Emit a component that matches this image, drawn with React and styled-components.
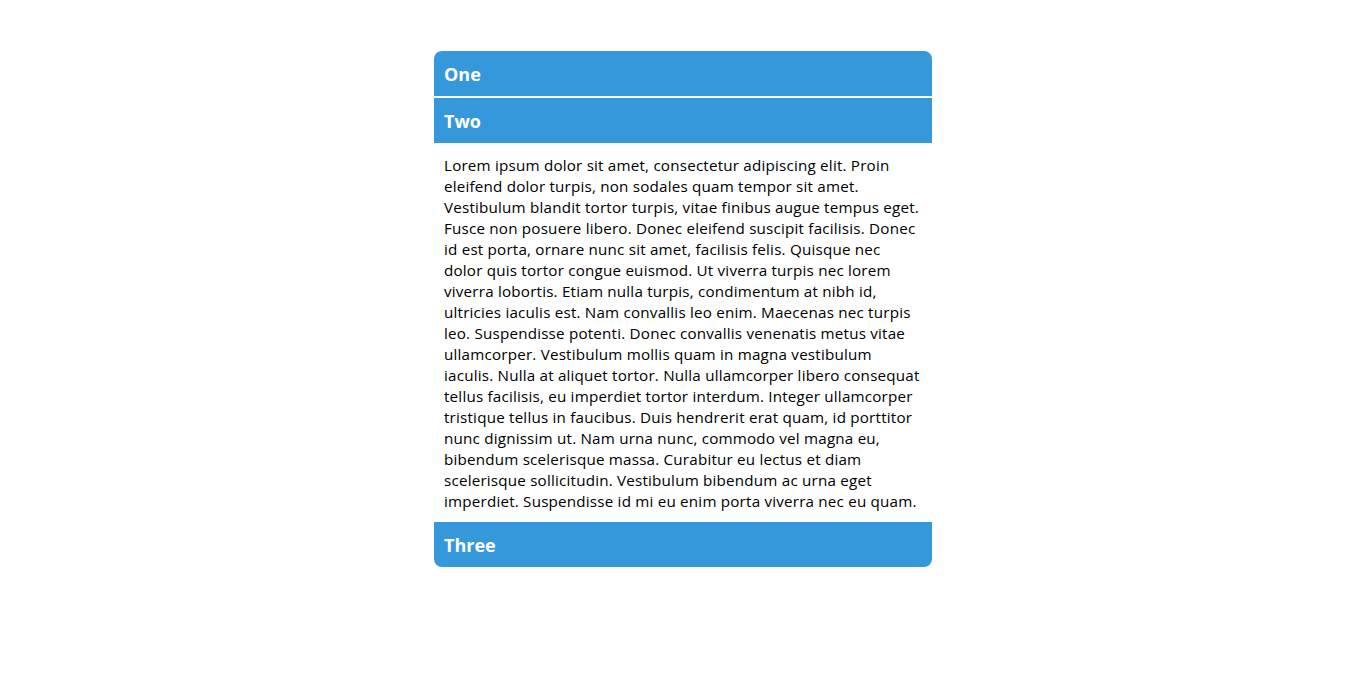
import React, { useState } from "react";
import styled, { createGlobalStyle } from "styled-components";

const GlobalStyle = createGlobalStyle`
  body {
    margin: 0;
    background: #ffffff;
    font-family: "Open Sans", "Noto Sans", sans-serif;
  }
`;

const items = [
  { title: "One", body: "" },
  {
    title: "Two",
    body:
      "Lorem ipsum dolor sit amet, consectetur adipiscing elit. Proin eleifend dolor turpis, non sodales quam tempor sit amet. Vestibulum blandit tortor turpis, vitae finibus augue tempus eget. Fusce non posuere libero. Donec eleifend suscipit facilisis. Donec id est porta, ornare nunc sit amet, facilisis felis. Quisque nec dolor quis tortor congue euismod. Ut viverra turpis nec lorem viverra lobortis. Etiam nulla turpis, condimentum at nibh id, ultricies iaculis est. Nam convallis leo enim. Maecenas nec turpis leo. Suspendisse potenti. Donec convallis venenatis metus vitae ullamcorper. Vestibulum mollis quam in magna vestibulum iaculis. Nulla at aliquet tortor. Nulla ullamcorper libero consequat tellus facilisis, eu imperdiet tortor interdum. Integer ullamcorper tristique tellus in faucibus. Duis hendrerit erat quam, id porttitor nunc dignissim ut. Nam urna nunc, commodo vel magna eu, bibendum scelerisque massa. Curabitur eu lectus et diam scelerisque sollicitudin. Vestibulum bibendum ac urna eget imperdiet. Suspendisse id mi eu enim porta viverra nec eu quam.",
  },
  { title: "Three", body: "" },
];

const App = () => {
  // which panel is open
  const [open, setOpen] = useState(1);

  return (
    <>
      <GlobalStyle />
      <Page>
        <Accordion>
          {items.map((item, i) => (
            <Item key={item.title}>
              <Header $last={i === items.length - 1} onClick={() => setOpen(open === i ? -1 : i)}>
                {item.title}
              </Header>
              {open === i && <Panel>{item.body}</Panel>}
            </Item>
          ))}
        </Accordion>
      </Page>
    </>
  );
};

const Page = styled.div`
  display: flex;
  justify-content: center;
  padding-top: 51px;
`;

const Accordion = styled.div`
  width: 498px;
  border-radius: 8px;
  overflow: hidden;
  display: flex;
  flex-direction: column;
`;

const Item = styled.div`
  display: flex;
  flex-direction: column;
`;

const Header = styled.div`
  background: #3498db;
  color: #ffffff;
  font-family: "Open Sans", "Noto Sans", sans-serif;
  font-weight: 700;
  font-size: 18px;
  line-height: 25px;
  padding: 11px 10px 9px;
  border-bottom: ${(p) => (p.$last ? "none" : "2px solid #ffffff")};
  cursor: pointer;
  user-select: none;
`;

const Panel = styled.div`
  padding: 10px 9px 10px 10px;
  font-size: 15.2px;
  letter-spacing: 0.2px;
  line-height: 21px;
  color: #000000;
  background: #ffffff;
`;

export default App;
